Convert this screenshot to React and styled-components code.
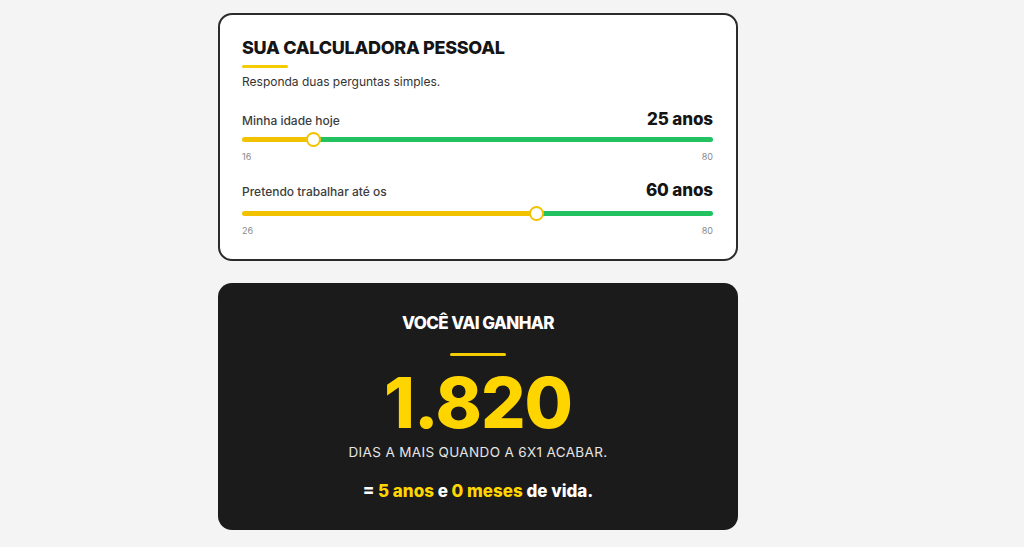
import React from "react";
import styled, { createGlobalStyle } from "styled-components";

const Global = createGlobalStyle`
  html, body { margin: 0; padding: 0; background: #f4f4f4; }
  body { font-family: "Inter", "Noto Sans", sans-serif; }
  * { box-sizing: border-box; }
`;

const Page = styled.main`
  display: flex;
  flex-direction: column;
  gap: 22px;
  width: 520px;
  margin-left: 218px;
  padding-top: 13px;
`;

const Card = styled.section`
  background: #fff;
  border: 2px solid #2b2b2b;
  border-radius: 14px;
  padding: 22px 23px 22px 22px;
  height: 248px;
`;

const Title = styled.h1`
  margin: 0;
  font-size: 18px;
  font-weight: 800;
  color: #151515;
  letter-spacing: -0.3px;
  line-height: 22px;
`;

const Bar = styled.div`
  width: ${(p) => p.w}px;
  height: 3px;
  background: #f5cc00;
  border-radius: 2px;
  margin: ${(p) => p.m};
`;

const Sub = styled.p`
  margin: 0;
  font-size: 12px;
  color: #333;
  line-height: 16px;
`;

const Field = styled.div`
  margin-top: ${(p) => p.mt}px;
`;

const FieldHead = styled.div`
  display: flex;
  justify-content: space-between;
  align-items: baseline;
`;

const Label = styled.span`
  font-size: 12px;
  font-weight: 500;
  color: #3d3d3d;
`;

const Value = styled.span`
  font-size: 17px;
  font-weight: 800;
  color: #151515;
  letter-spacing: -0.1px;
`;

const Track = styled.div`
  position: relative;
  height: 5px;
  border-radius: 3px;
  margin-top: ${(p) => p.mt}px;
`;

const Thumb = styled.div`
  position: absolute;
  top: 50%;
  width: 15px;
  height: 15px;
  margin-left: -7.5px;
  margin-top: -7.5px;
  border-radius: 50%;
  background: #fff;
  border: 2px solid #f2c200;
`;

const Ends = styled.div`
  display: flex;
  justify-content: space-between;
  margin-top: 9px;
  font-size: 9px;
  color: #8a8a8a;
`;

const Dark = styled.section`
  background: #1b1b1b;
  border-radius: 14px;
  height: 247px;
  display: flex;
  flex-direction: column;
  align-items: center;
  padding-top: 30px;
`;

const DarkTitle = styled.h2`
  margin: 0;
  font-size: 17px;
  font-weight: 800;
  color: #fff;
  letter-spacing: -0.6px;
  line-height: 20px;
`;

const Big = styled.div`
  font-size: 70px;
  font-weight: 800;
  color: #ffd500;
  letter-spacing: -1px;
  line-height: 78px;
  margin-top: 8px;
`;

const Days = styled.div`
  font-size: 13.5px;
  line-height: 16px;
  color: #e6e6e6;
  margin-top: 2px;
  letter-spacing: 0.35px;
`;

const Result = styled.div`
  margin-top: 21px;
  font-size: 17px;
  line-height: 20px;
  font-weight: 800;
  color: #fff;
  letter-spacing: 0;
`;

const Hi = styled.span`
  color: #ffd500;
`;

function Slider({ value, min, max, label, mt, tmt }) {
  const frac = (value - min) / (max - min);
  const W = 470;
  const r = 7;
  const pos = r + frac * (W - 2 * r);
  return (
    <Field mt={mt}>
      <FieldHead>
        <Label>{label}</Label>
        <Value>{value} anos</Value>
      </FieldHead>
      <Track
        mt={tmt}
        style={{
          background: `linear-gradient(to right, #f2c200 0 ${pos}px, #22c263 ${pos}px 100%)`,
        }}
      >
        <Thumb style={{ left: pos }} />
      </Track>
      <Ends>
        <span>{min}</span>
        <span>{max}</span>
      </Ends>
    </Field>
  );
}

export default function App() {
  return (
    <>
      <Global />
      <Page>
        <Card>
          <Title>SUA CALCULADORA PESSOAL</Title>
          <Bar w={46} m="6px 0 6px" />
          <Sub>Responda duas perguntas simples.</Sub>
          <Slider value={25} min={16} max={80} label="Minha idade hoje" mt={19} tmt={8} />
          <Slider value={60} min={26} max={80} label="Pretendo trabalhar até os" mt={18} tmt={11} />
        </Card>
        <Dark>
          <DarkTitle>VOCÊ VAI GANHAR</DarkTitle>
          <Bar w={56} m="20px 0 0" />
          <Big>1.820</Big>
          <Days>DIAS A MAIS QUANDO A 6X1 ACABAR.</Days>
          <Result>
            = <Hi>5 anos</Hi> e <Hi>0 meses</Hi> de vida.
          </Result>
        </Dark>
      </Page>
    </>
  );
}
